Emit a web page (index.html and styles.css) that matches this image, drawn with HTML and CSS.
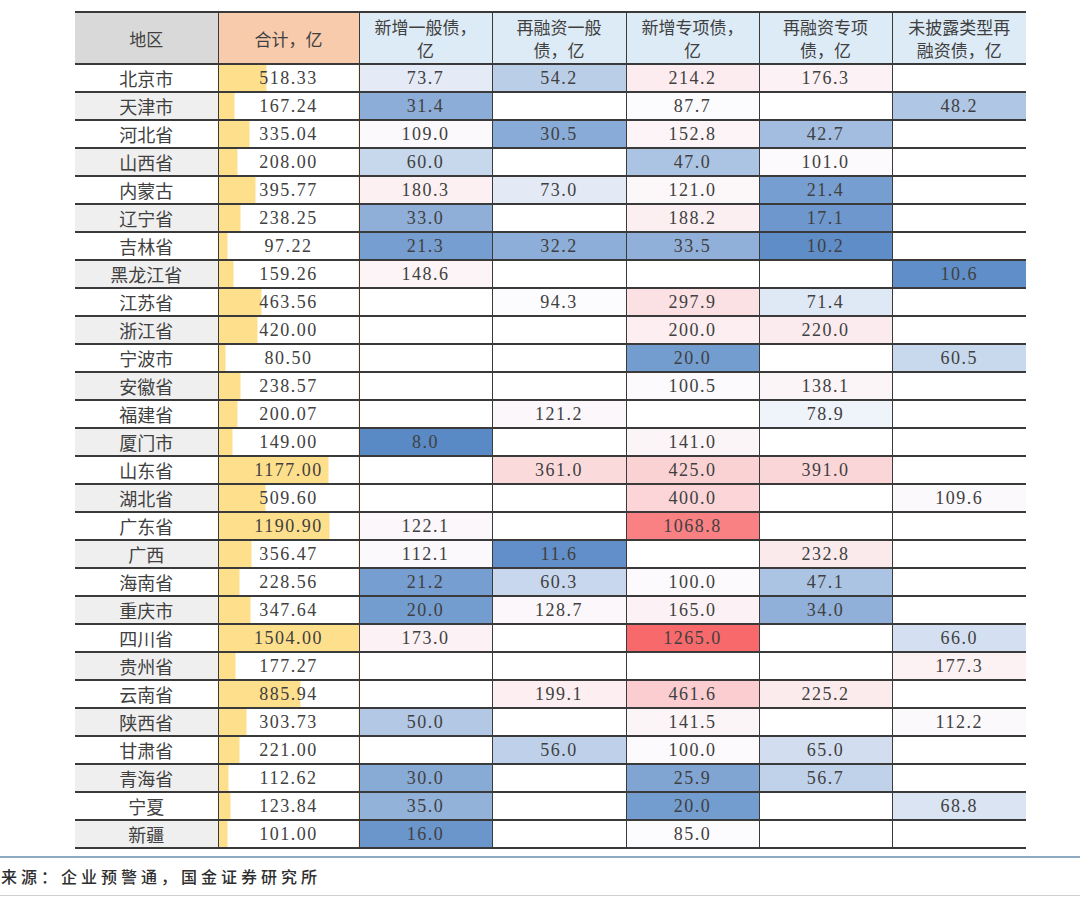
FILE: index.html
```html
<!DOCTYPE html>
<html lang="zh">
<head>
<meta charset="utf-8">
<title>地方债发行统计</title>
<link rel="stylesheet" href="styles.css">
</head>
<body>
<table class="t">
<colgroup>
<col class="w-region"><col class="w-total"><col class="w-a"><col class="w-b"><col class="w-c"><col class="w-d"><col class="w-e">
</colgroup>
<thead>
<tr>
<th class="h-region">地区</th>
<th class="h-total">合计，亿</th>
<th class="h-item">新增一般债，<br>亿</th>
<th class="h-item">再融资一般<br>债，亿</th>
<th class="h-item">新增专项债，<br>亿</th>
<th class="h-item">再融资专项<br>债，亿</th>
<th class="h-item">未披露类型再<br>融资债，亿</th>
</tr>
</thead>
<tbody>
<tr><td class="region">北京市</td><td class="total">518.33</td><td class="v">73.7</td><td class="v">54.2</td><td class="v">214.2</td><td class="v">176.3</td><td class="v"></td></tr>
<tr><td class="region">天津市</td><td class="total">167.24</td><td class="v">31.4</td><td class="v"></td><td class="v">87.7</td><td class="v"></td><td class="v">48.2</td></tr>
<tr><td class="region">河北省</td><td class="total">335.04</td><td class="v">109.0</td><td class="v">30.5</td><td class="v">152.8</td><td class="v">42.7</td><td class="v"></td></tr>
<tr><td class="region">山西省</td><td class="total">208.00</td><td class="v">60.0</td><td class="v"></td><td class="v">47.0</td><td class="v">101.0</td><td class="v"></td></tr>
<tr><td class="region">内蒙古</td><td class="total">395.77</td><td class="v">180.3</td><td class="v">73.0</td><td class="v">121.0</td><td class="v">21.4</td><td class="v"></td></tr>
<tr><td class="region">辽宁省</td><td class="total">238.25</td><td class="v">33.0</td><td class="v"></td><td class="v">188.2</td><td class="v">17.1</td><td class="v"></td></tr>
<tr><td class="region">吉林省</td><td class="total">97.22</td><td class="v">21.3</td><td class="v">32.2</td><td class="v">33.5</td><td class="v">10.2</td><td class="v"></td></tr>
<tr><td class="region">黑龙江省</td><td class="total">159.26</td><td class="v">148.6</td><td class="v"></td><td class="v"></td><td class="v"></td><td class="v">10.6</td></tr>
<tr><td class="region">江苏省</td><td class="total">463.56</td><td class="v"></td><td class="v">94.3</td><td class="v">297.9</td><td class="v">71.4</td><td class="v"></td></tr>
<tr><td class="region">浙江省</td><td class="total">420.00</td><td class="v"></td><td class="v"></td><td class="v">200.0</td><td class="v">220.0</td><td class="v"></td></tr>
<tr><td class="region">宁波市</td><td class="total">80.50</td><td class="v"></td><td class="v"></td><td class="v">20.0</td><td class="v"></td><td class="v">60.5</td></tr>
<tr><td class="region">安徽省</td><td class="total">238.57</td><td class="v"></td><td class="v"></td><td class="v">100.5</td><td class="v">138.1</td><td class="v"></td></tr>
<tr><td class="region">福建省</td><td class="total">200.07</td><td class="v"></td><td class="v">121.2</td><td class="v"></td><td class="v">78.9</td><td class="v"></td></tr>
<tr><td class="region">厦门市</td><td class="total">149.00</td><td class="v">8.0</td><td class="v"></td><td class="v">141.0</td><td class="v"></td><td class="v"></td></tr>
<tr><td class="region">山东省</td><td class="total">1177.00</td><td class="v"></td><td class="v">361.0</td><td class="v">425.0</td><td class="v">391.0</td><td class="v"></td></tr>
<tr><td class="region">湖北省</td><td class="total">509.60</td><td class="v"></td><td class="v"></td><td class="v">400.0</td><td class="v"></td><td class="v">109.6</td></tr>
<tr><td class="region">广东省</td><td class="total">1190.90</td><td class="v">122.1</td><td class="v"></td><td class="v">1068.8</td><td class="v"></td><td class="v"></td></tr>
<tr><td class="region">广西</td><td class="total">356.47</td><td class="v">112.1</td><td class="v">11.6</td><td class="v"></td><td class="v">232.8</td><td class="v"></td></tr>
<tr><td class="region">海南省</td><td class="total">228.56</td><td class="v">21.2</td><td class="v">60.3</td><td class="v">100.0</td><td class="v">47.1</td><td class="v"></td></tr>
<tr><td class="region">重庆市</td><td class="total">347.64</td><td class="v">20.0</td><td class="v">128.7</td><td class="v">165.0</td><td class="v">34.0</td><td class="v"></td></tr>
<tr><td class="region">四川省</td><td class="total">1504.00</td><td class="v">173.0</td><td class="v"></td><td class="v">1265.0</td><td class="v"></td><td class="v">66.0</td></tr>
<tr><td class="region">贵州省</td><td class="total">177.27</td><td class="v"></td><td class="v"></td><td class="v"></td><td class="v"></td><td class="v">177.3</td></tr>
<tr><td class="region">云南省</td><td class="total">885.94</td><td class="v"></td><td class="v">199.1</td><td class="v">461.6</td><td class="v">225.2</td><td class="v"></td></tr>
<tr><td class="region">陕西省</td><td class="total">303.73</td><td class="v">50.0</td><td class="v"></td><td class="v">141.5</td><td class="v"></td><td class="v">112.2</td></tr>
<tr><td class="region">甘肃省</td><td class="total">221.00</td><td class="v"></td><td class="v">56.0</td><td class="v">100.0</td><td class="v">65.0</td><td class="v"></td></tr>
<tr><td class="region">青海省</td><td class="total">112.62</td><td class="v">30.0</td><td class="v"></td><td class="v">25.9</td><td class="v">56.7</td><td class="v"></td></tr>
<tr><td class="region">宁夏</td><td class="total">123.84</td><td class="v">35.0</td><td class="v"></td><td class="v">20.0</td><td class="v"></td><td class="v">68.8</td></tr>
<tr><td class="region">新疆</td><td class="total">101.00</td><td class="v">16.0</td><td class="v"></td><td class="v">85.0</td><td class="v"></td><td class="v"></td></tr>
</tbody>
</table>
<div class="source">来源：企业预警通，国金证券研究所</div>
<script src="script.js"></script>
</body>
</html>
```

FILE: styles.css
```css
html, body {
  margin: 0;
  padding: 0;
  background: #ffffff;
}
body {
  font-family: "Liberation Serif", "Noto Sans CJK SC", serif;
  color: #404040;
  overflow: hidden;
}
.t {
  border-collapse: collapse;
  table-layout: fixed;
  width: 951px;
  margin: 11px 0 0 75px;
}
.w-region { width: 143px; }
.w-total { width: 141px; }
.w-a { width: 133px; }
.w-b { width: 134px; }
.w-c { width: 133px; }
.w-d { width: 133px; }
.w-e { width: 134px; }

.t th {
  height: 50px;
  padding: 0;
  font-family: "Noto Sans CJK SC", sans-serif;
  font-weight: 400;
  font-size: 17px;
  line-height: 23px;
  color: #404040;
  text-align: center;
  vertical-align: middle;
  border-top: 2px solid #3a3a3a;
  border-bottom: 2px solid #3a3a3a;
}
.t th + th,
.t td + td {
  border-left: 1px solid #3a3a3a;
}
.h-region { background: #d9d9d9; }
.h-total { background: #f8cbad; }
.h-item { background: #ddebf7; }

.t td {
  height: 26px;
  padding: 0;
  text-align: center;
  vertical-align: middle;
  font-size: 18px;
  line-height: 26px;
  letter-spacing: 1.5px;
  border-bottom: 2px solid #3a3a3a;
  background: #ffffff;
  white-space: nowrap;
}
.t td.region {
  font-family: "Noto Sans CJK SC", sans-serif;
  font-size: 18px;
  letter-spacing: 0;
}
.t tbody tr:nth-child(even) td.region {
  background: #efefef;
}
.t td.total {
  background: linear-gradient(to right, #fedf8c var(--p, 0%), #ffffff var(--p, 0%));
}

.source {
  margin-top: 7px;
  border-top: 2px solid #8faac3;
  border-bottom: 1px solid #d0d0d0;
  font-family: "Noto Sans CJK SC", sans-serif;
  font-weight: 500;
  font-size: 16px;
  line-height: 37px;
  letter-spacing: 4px;
  color: #2e2e2e;
  padding-left: 1px;
  white-space: nowrap;
}
```

FILE: script.js
```js
(function () {
  var cells = Array.prototype.slice.call(document.querySelectorAll('td.v'));
  var vals = [];
  cells.forEach(function (c) {
    var v = parseFloat(c.textContent);
    if (!isNaN(v)) vals.push(v);
  });
  vals.sort(function (a, b) { return a - b; });
  var n = vals.length;
  var min = vals[0], max = vals[n - 1];
  var k = (n - 1) * 0.5, lo = Math.floor(k), hi = Math.ceil(k);
  var med = vals[lo] + (vals[hi] - vals[lo]) * (k - lo);
  var cLow = [90, 138, 198], cMid = [252, 252, 255], cHigh = [248, 105, 107];
  function mix(a, b, t) {
    return 'rgb(' + a.map(function (x, i) { return Math.round(x + (b[i] - x) * t); }).join(',') + ')';
  }
  cells.forEach(function (c) {
    var v = parseFloat(c.textContent);
    if (isNaN(v)) return;
    var col;
    if (v <= med) col = mix(cMid, cLow, (med - v) / (med - min));
    else col = mix(cMid, cHigh, (v - med) / (max - med));
    c.style.background = col;
  });
  var totals = Array.prototype.slice.call(document.querySelectorAll('td.total'));
  var tmax = 0;
  totals.forEach(function (c) { tmax = Math.max(tmax, parseFloat(c.textContent)); });
  totals.forEach(function (c) {
    var p = parseFloat(c.textContent) / tmax * 100;
    c.style.setProperty('--p', p.toFixed(2) + '%');
  });
})();
```
